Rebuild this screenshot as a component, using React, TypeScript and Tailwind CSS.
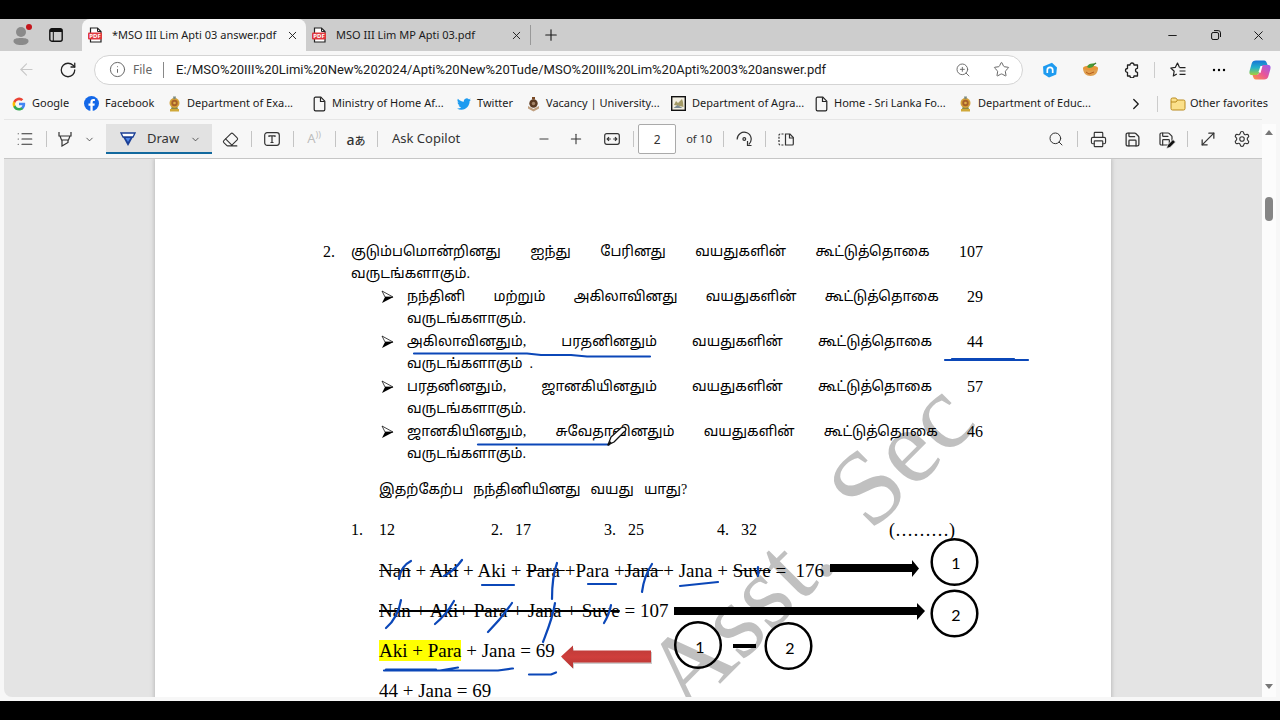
import type { ReactNode } from 'react';
import {
  ArrowLeft,
  ChevronDown,
  ChevronRight,
  Eraser,
  Info,
  List,
  Minus,
  MoveDiagonal,
  Plus,
  Printer,
  RotateCw,
  Save,
  Search,
  Settings,
  Star,
  X,
  ZoomIn,
} from 'lucide-react';

interface BookmarkItem {
  label: string;
  icon: ReactNode;
  width: string;
}

function PdfIcon() {
  return (
    <svg width="15" height="16" viewBox="0 0 15 16" className="shrink-0">
      <path d="M2.500 1h7L13 4.500V15H2.500z" fill="#fff" stroke="#222" strokeWidth="1.200" />
      <path d="M9.500 1v3.500H13" fill="none" stroke="#222" />
      <rect x="0" y="5.500" width="14" height="7" rx="1" fill="#e0393e" />
      <text x="7" y="11" textAnchor="middle" fontSize="6" fontWeight="700" fill="#fff">PDF</text>
    </svg>
  );
}

function GoogleIcon() {
  return (
    <svg width="14" height="14" viewBox="0 0 24 24">
      <path fill="#4285F4" d="M22.600 12.200c0-.8-.1-1.500-.2-2.200H12v4.300h5.900a5 5 0 0 1-2.200 3.300v2.800h3.600c2.100-2 3.300-4.900 3.300-8.200z" />
      <path fill="#34A853" d="M12 23c3 0 5.500-1 7.300-2.600l-3.600-2.800c-1 .7-2.200 1.100-3.700 1.100-2.900 0-5.300-1.900-6.200-4.500H2.200v2.800A11 11 0 0 0 12 23z" />
      <path fill="#FBBC05" d="M5.800 14.200a6.600 6.600 0 0 1 0-4.300V7.100H2.200a11 11 0 0 0 0 9.900z" />
      <path fill="#EA4335" d="M12 5.400c1.600 0 3.100.6 4.200 1.600l3.200-3.100A11 11 0 0 0 2.200 7.100l3.600 2.800C6.700 7.300 9.100 5.400 12 5.400z" />
    </svg>
  );
}

function FacebookIcon() {
  return (
    <svg width="15" height="15" viewBox="0 0 24 24">
      <circle cx="12" cy="12" r="12" fill="#1468e8" />
      <path fill="#fff" d="M16.700 15.500l.5-3.500h-3.300V9.800c0-1 .5-1.900 2-1.900h1.500V5s-1.400-.2-2.700-.2c-2.700 0-4.500 1.600-4.500 4.700V12h-3v3.500h3V24h3.700v-8.500z" />
    </svg>
  );
}

function TwitterIcon() {
  return (
    <svg width="14" height="14" viewBox="0 0 24 24" fill="#1d9bf0">
      <path d="M23.950 4.570a10 10 0 0 1-2.820.77 4.960 4.960 0 0 0 2.160-2.720c-.95.55-2 .95-3.130 1.180a4.920 4.920 0 0 0-8.380 4.480C7.690 8.090 4.070 6.130 1.640 3.160a4.920 4.920 0 0 0 1.520 6.570 4.900 4.900 0 0 1-2.230-.61v.06a4.920 4.920 0 0 0 3.950 4.830 5 5 0 0 1-2.210.08 4.940 4.940 0 0 0 4.600 3.420A9.870 9.870 0 0 1 0 19.540a14 14 0 0 0 7.550 2.210c9.050 0 14-7.500 14-13.980 0-.21 0-.42-.02-.63a9.940 9.940 0 0 0 2.420-2.570z" />
    </svg>
  );
}

function EmblemIcon() {
  return (
    <svg width="13" height="16" viewBox="1 0 13 16">
      <path d="M3 13h9v2.500H3z" fill="#d0a93a" />
      <path d="M5 10h5l1 3H4z" fill="#8a8a45" />
      <circle cx="7.500" cy="7" r="5" fill="#d3a038" />
      <circle cx="7.500" cy="7" r="3.200" fill="#a8602a" />
      <circle cx="7.500" cy="7" r="1.300" fill="#dfb04a" />
      <path d="M6 0.500h3L8.500 3h-2z" fill="#7b8a80" />
    </svg>
  );
}

function CrestIcon() {
  return (
    <svg width="13" height="16" viewBox="1 0 13 16">
      <path d="M2 10l5.500 3L13 10v2.500L7.500 15.500 2 12.500z" fill="#c0a080" />
      <circle cx="7.500" cy="7.500" r="4.200" fill="#5b3a22" />
      <circle cx="7.500" cy="7.500" r="1.700" fill="#a48468" />
      <path d="M6 1h3v2.500H6z" fill="#7a4a26" />
    </svg>
  );
}

function AgrarianIcon() {
  return (
    <svg width="15" height="15" viewBox="0 0 15 15">
      <rect x="0.700" y="0.700" width="13.600" height="13.600" fill="#f2efe2" stroke="#111" strokeWidth="1.400" />
      <path d="M3 9l2-4 2 2 4-4 1 3 .5 5-4-1z" fill="#a39a66" />
      <path d="M2.500 12l4-3 5 3z" fill="#7c8b92" />
    </svg>
  );
}

function PageIcon() {
  return (
    <svg width="13" height="16" viewBox="1 0 13 16" fill="none" stroke="#222" strokeWidth="1.200">
      <path d="M3.500 1.200h5.300l4 4v8.300a1.300 1.300 0 0 1-1.300 1.300h-8a1.300 1.300 0 0 1-1.300-1.300v-11a1.300 1.300 0 0 1 1.300-1.300z" />
      <path d="M8.500 1.500v4h4" />
    </svg>
  );
}

function FolderIcon() {
  return (
    <svg width="16" height="14" viewBox="0 0 16 14">
      <path d="M1 2.500A1.500 1.500 0 0 1 2.500 1h3.300l1.700 2h6A1.500 1.500 0 0 1 15 4.500v7a1.500 1.500 0 0 1-1.500 1.500h-11A1.500 1.500 0 0 1 1 11.500z" fill="#fbe08a" stroke="#b98a1c" />
      <path d="M1 5h5l1.500-2" fill="none" stroke="#b98a1c" />
    </svg>
  );
}

function ProfileIcon() {
  return (
    <svg width="22" height="22" viewBox="0 0 22 22">
      <circle cx="11" cy="8" r="5" fill="#8a8a8a" />
      <path d="M3.500 17c0-2.200 3-3 7.500-3s7.500.8 7.500 3c0 2.500-3 4-7.500 4s-7.500-1.500-7.500-4z" fill="#8a8a8a" />
      <circle cx="19" cy="3" r="3" fill="#c4151c" />
    </svg>
  );
}

function WorkspaceIcon() {
  return (
    <svg width="14" height="14" viewBox="0 0 14 14" fill="none" stroke="#111">
      <rect x="0.800" y="0.800" width="12.400" height="12.400" rx="2" strokeWidth="1.400" />
      <path d="M1 2.500h12" strokeWidth="3" />
      <path d="M4.300 4v9" />
    </svg>
  );
}

function RestoreIcon() {
  return (
    <svg width="10" height="10" viewBox="0 0 10 10" fill="none" stroke="#111">
      <rect x="0.600" y="2.500" width="7" height="7" rx="1.500" />
      <path d="M3 0.600h4.200a2.300 2.300 0 0 1 2.300 2.300V7" />
    </svg>
  );
}

function ShieldIcon() {
  return (
    <svg width="16" height="16" viewBox="0 0 16 16">
      <path d="M10 0.800l5 4.700-.8 7L7 15.500 1.500 12 1 4.500z" fill="#1e9bf0" />
      <path d="M5.300 11V8a2.700 2.700 0 0 1 5.400 0v3" fill="none" stroke="#fff" strokeWidth="1.700" />
    </svg>
  );
}

function BowlIcon() {
  return (
    <svg width="17" height="15" viewBox="0 0 17 15">
      <path d="M1 6h15c0 5-3 8-7.500 8S1 11 1 6z" fill="#e0a050" />
      <ellipse cx="8.500" cy="6" rx="7.500" ry="2.500" fill="#e8963a" />
      <path d="M5 5c1-3 4-4 7-3.500C13 3 11 6 7 6z" fill="#4a9a36" />
      <path d="M11 3l3-2" stroke="#3d7d2c" strokeWidth="1.500" />
      <path d="M4 10l3 2 5-2" fill="none" stroke="#b75c1b" />
    </svg>
  );
}

function PuzzleIcon() {
  return (
    <svg width="16" height="16" viewBox="0 0 16 16" fill="none" stroke="#222" strokeWidth="1.300" strokeLinejoin="round">
      <path d="M3.500 3H6a2 2 0 0 1 4 0h3.500v3.300a2 2 0 1 0 0 4v3.700H10a2 2 0 0 1-4 0H3.500v-3.500a2 2 0 0 1 0-4z" />
    </svg>
  );
}

function FavoritesIcon() {
  return (
    <svg width="16" height="16" viewBox="0 0 16 16" fill="none" stroke="#222" strokeWidth="1.200">
      <path d="M9.500 5.500L7.500 1 5.400 5.300.8 6l3.400 3.200-.9 4.800 3.500-2" strokeLinejoin="round" />
      <path d="M9.500 5.700h6M9.500 9h6M9.500 12.300h6" />
    </svg>
  );
}

function CopilotIcon() {
  return (
    <svg width="22" height="20" viewBox="0 0 22 20">
      <defs>
        <linearGradient id="cool" x1="0" y1="0" x2="0" y2="1">
          <stop offset="0" stopColor="#1673d6" />
          <stop offset="0.5" stopColor="#24b1c9" />
          <stop offset="1" stopColor="#a8d03a" />
        </linearGradient>
        <linearGradient id="warm" x1="1" y1="0" x2="0" y2="1">
          <stop offset="0" stopColor="#9a5cf0" />
          <stop offset="0.5" stopColor="#e8559a" />
          <stop offset="1" stopColor="#ff9440" />
        </linearGradient>
      </defs>
      <path d="M7 0.500h8c2 0 2.500 1.500 3 3L19 6h-4c-2 0-3 1-3.500 3L10 13c-.5 1.500-1.500 2-3 2H3c-2.500 0-3-2-2.300-4.500l2-7C3.300 1.500 4.500.5 7 .5z" fill="url(#cool)" />
      <path d="M15 19.500H7c-2 0-2.500-1.500-3-3L3.500 15H7c2 0 3-1 3.500-3L12 7c.5-1.500 1.500-2 3-2h4c2.500 0 3 2 2.300 4.500l-2 7c-.6 2-1.800 3-4.300 3z" fill="url(#warm)" />
      <path d="M9.500 12l2-6h2l-2 7z" fill="#fff" />
    </svg>
  );
}

function HighlighterIcon() {
  return (
    <svg width="14" height="16" viewBox="0 0 14 16" fill="none" stroke="#333" strokeWidth="1.200">
      <path d="M1 1v4h12V1M2 5l1.500 4h7L12 5M4 9v6l6-3.500V9" />
    </svg>
  );
}

function DrawIcon() {
  return (
    <svg width="16" height="15" viewBox="0 0 16 15">
      <path d="M1 1h14l-2 4H3z" fill="#fff" stroke="#1b3f96" strokeWidth="1.300" />
      <path d="M3 5h10L8 14z" fill="#1b3f96" />
      <path d="M5.500 6h5L8 10z" fill="#4f86e8" />
    </svg>
  );
}

function TextBoxIcon() {
  return (
    <svg width="16" height="14" viewBox="0 0 16 14" fill="none" stroke="#333" strokeWidth="1.200">
      <rect x="0.700" y="0.700" width="14.600" height="12.600" rx="2.500" />
      <path d="M5 5V3.800h6V5M8 3.800v6.700M6.500 10.500h3" />
    </svg>
  );
}

function FitWidthIcon() {
  return (
    <svg width="16" height="12" viewBox="0 0 16 12" fill="none" stroke="#333" strokeWidth="1.200">
      <rect x="0.700" y="0.700" width="14.600" height="10.600" rx="2" />
      <path d="M6.800 6H3.500M5 4.200L3.200 6 5 7.800M9.200 6h3.300M11 4.200L12.800 6 11 7.800" />
    </svg>
  );
}

function RotateIcon() {
  return (
    <svg width="17" height="16" viewBox="0 0 17 16" fill="none" stroke="#333" strokeWidth="1.200">
      <path d="M1.200 8.500a7 7 0 1 1 11.500 5" />
      <path d="M11.500 10v4.500h4" />
      <circle cx="8.300" cy="8" r="1.400" />
    </svg>
  );
}

function PageViewIcon() {
  return (
    <svg width="16" height="13" viewBox="0 0 16 13" fill="none" stroke="#333" strokeWidth="1.200">
      <path d="M7.500 1H12l3.300 3.500V11a1 1 0 0 1-1 1H7.500z" />
      <path d="M11.500 1v4h4" />
      <path d="M5.500 1H2.200a1.200 1.200 0 0 0-1.200 1.200v8.600A1.200 1.200 0 0 0 2.200 12h3.300" strokeDasharray="2 1.300" />
    </svg>
  );
}

function SaveAsIcon() {
  return (
    <span className="relative">
      <Save size={16} strokeWidth={1.8} />
      <svg width="10" height="10" viewBox="0 0 10 10" className="absolute -right-0.5 -bottom-0.5">
        <path d="M0.500 9.500l1-3.500 5.500-5.500 2.500 2.500L4 8.500z" fill="#111" stroke="#f7f7f7" strokeWidth="0.800" />
      </svg>
    </span>
  );
}

function ToolButton({ label, children }: { label: string; children: ReactNode }) {
  return (
    <button aria-label={label} className="flex h-8 w-8 shrink-0 items-center justify-center text-[#333]">
      {children}
    </button>
  );
}

function NavButton({ label, children }: { label: string; children: ReactNode }) {
  return (
    <button aria-label={label} className="flex h-8 w-[41px] shrink-0 items-center justify-center text-[#222]">
      {children}
    </button>
  );
}

function ToolDivider() {
  return (
    <div className="flex w-[10px] shrink-0 justify-center">
      <div className="h-4 w-px bg-[#c4c4c4]" />
    </div>
  );
}

function Tab({ title, active }: { title: string; active?: boolean }) {
  return (
    <div className={active ? 'flex w-56 items-center rounded-t-lg bg-[#f7f7f7] pl-[6px]' : 'flex w-56 items-center pl-[6px]'}>
      <PdfIcon />
      <span className="ml-[9px] flex-1 whitespace-nowrap text-[11px]">{title}</span>
      <button aria-label={`Close ${title}`} className="flex h-7 w-7 items-center justify-center">
        <X size={13} strokeWidth={1.7} />
      </button>
    </div>
  );
}

const BOOKMARKS: BookmarkItem[] = [
  { label: 'Google', icon: <GoogleIcon />, width: 'w-[72px]' },
  { label: 'Facebook', icon: <FacebookIcon />, width: 'w-[84px]' },
  { label: 'Department of Exa...', icon: <EmblemIcon />, width: 'w-[145px]' },
  { label: 'Ministry of Home Af...', icon: <PageIcon />, width: 'w-[144px]' },
  { label: 'Twitter', icon: <TwitterIcon />, width: 'w-[70px]' },
  { label: 'Vacancy | University...', icon: <CrestIcon />, width: 'w-[144px]' },
  { label: 'Department of Agra...', icon: <AgrarianIcon />, width: 'w-[144px]' },
  { label: 'Home - Sri Lanka Fo...', icon: <PageIcon />, width: 'w-[144px]' },
  { label: 'Department of Educ...', icon: <EmblemIcon />, width: 'w-[144px]' },
];

const CLUES = [
  { words: ['நந்தினி', 'மற்றும்', 'அகிலாவினது', 'வயதுகளின்', 'கூட்டுத்தொகை'], total: 29, end: 'வருடங்களாகும்.' },
  { words: ['அகிலாவினதும்,', 'பரதனினதும்', 'வயதுகளின்', 'கூட்டுத்தொகை'], total: 44, end: 'வருடங்களாகும்\u00a0 .' },
  { words: ['பரதனினதும்,', 'ஜானகியினதும்', 'வயதுகளின்', 'கூட்டுத்தொகை'], total: 57, end: 'வருடங்களாகும்.' },
  { words: ['ஜானகியினதும்,', 'சுவேதாவினதும்', 'வயதுகளின்', 'கூட்டுத்தொகை'], total: 46, end: 'வருடங்களாகும்.' },
];

const QUESTION = ['இதற்கேற்ப', 'நந்தினியினது', 'வயது', 'யாது?'];

const ANSWERS = ['17', '25', '32'];

function JustifiedLine({ words, total }: { words: string[]; total: number }) {
  return (
    <p className="flex justify-between whitespace-nowrap">
      {words.map((word) => (
        <span key={word}>{word}</span>
      ))}
      <span className="text-[16px]">{total}</span>
    </p>
  );
}

function Watermark() {
  return (
    <svg className="absolute top-0 left-0 h-[539px] w-[956px]" viewBox="155 158 956 539" aria-hidden="true">
      <g transform="translate(700 700) rotate(-45)" fill="#c0c0c0" fontSize="106" fontFamily="Liberation Serif, serif">
        <text x="-20" y="2">Asst.</text>
        <text x="240" y="2">Sec</text>
      </g>
    </svg>
  );
}

/* Shapes typed into the document plus the pen strokes drawn over it */
function Annotations() {
  return (
    <svg className="absolute top-0 left-0 h-[539px] w-[956px]" viewBox="155 158 956 539">
      <defs>
        <linearGradient id="redArrow" x1="0" y1="0" x2="0" y2="1">
          <stop offset="0" stopColor="#b93a37" />
          <stop offset="0.5" stopColor="#cf3f3c" />
          <stop offset="1" stopColor="#b33431" />
        </linearGradient>
      </defs>
      <path d="M830 563h82v-4l7 8.500-7 8.500v-5h-82z" />
      <path d="M674 606h243v-4l8 8-8 9v-5H674z" />
      <path d="M733 643h23v4h-23z" />
      <path d="M562 657l12-10v4h78v12h-78v5z" fill="#999" opacity="0.500" />
      <path d="M561 655.500l12-11v5h78v12h-78v6z" fill="url(#redArrow)" />
      <g fill="none" stroke="#000" strokeWidth="2.500">
        <circle cx="954.500" cy="561" r="22.800" />
        <circle cx="954.500" cy="612.500" r="22.800" />
        <circle cx="698" cy="644" r="22.800" />
        <circle cx="788.500" cy="645" r="22.800" />
      </g>
      <g fontFamily="Lato, sans-serif" fontSize="16" textAnchor="middle">
        <text x="956" y="568">1</text>
        <text x="956" y="620">2</text>
        <text x="700" y="652">1</text>
        <text x="790" y="653">2</text>
      </g>
      <g fill="none" stroke="#0b47b8" strokeWidth="2.200" strokeLinecap="round" strokeLinejoin="round">
        <path d="M414 352.500h113l14 1.500h30l16 1.500h63" />
        <path d="M945 359h83M952 358h62" />
        <path d="M478 443.500h131" />
        <path d="M399 578c1-8 4-14 12-18" />
        <path d="M444 575q10-5 18-16" />
        <path d="M482 584h32M588 583h28M680 585l38-4" />
        <path d="M557 562c-4 11-5 22-5 36" />
        <path d="M652 563q-8 12-10 28" />
        <path d="M758 566v9" />
        <path d="M401 599c-2 12-8 22-15 28" />
        <path d="M454 600q-8 14-19 23M512 602q-11 16-24 29" />
        <path d="M555 602c-2 14-7 26-12 39" />
        <path d="M611 604q-2 10-7 18" />
        <path d="M384 669.500h56l18-3M386 668.500h50M440 669.500h58l14-2h1" />
        <path d="M529 673.500h22l5-2" />
      </g>
      {/* Pen cursor */}
      <g fill="#fff" stroke="#111" strokeWidth="1.300" strokeLinejoin="round">
        <path d="M608 444l3-8 10-9q4-2 5 1 0 2-2 3l-10 10z" />
        <path d="M608 444l3-3" strokeWidth="2" />
      </g>
    </svg>
  );
}

function DocumentPage() {
  return (
    <article className="relative mx-auto h-[1100px] w-[956px] bg-white pt-[82px] pr-32 pl-[168px] font-['Liberation_Serif','Noto_Sans_Tamil',serif] text-[16px] leading-[22px] text-black shadow-[0_0_4px_1px_#bdbdbd]">
      <Watermark />
      <div className="relative grid grid-cols-[28px_1fr]">
        <span>2.</span>
        <div className="text-[14px]">
          <JustifiedLine words={['குடும்பமொன்றினது', 'ஐந்து', 'பேரினது', 'வயதுகளின்', 'கூட்டுத்தொகை']} total={107} />
          <p>வருடங்களாகும்.</p>
          <ul className="mt-px flex flex-col gap-px pl-7">
            {CLUES.map((clue) => (
              <li key={clue.words[0]} className="grid grid-cols-[28px_1fr]">
                <svg width="14" height="14" viewBox="0 0 14 14" className="mt-1 ml-0.5">
                  <path d="M1 1l11 6H4z" fill="#fff" stroke="#111" strokeWidth="0.800" />
                  <path d="M4 7h8.500L1 13z" />
                </svg>
                <div>
                  <JustifiedLine words={clue.words} total={clue.total} />
                  <p>{clue.end}</p>
                </div>
              </li>
            ))}
          </ul>
        </div>
      </div>

      <p className="relative mt-[14px] flex gap-[10px] pl-14 text-[14px]">
        {QUESTION.map((word) => (
          <span key={word}>{word}</span>
        ))}
      </p>

      <div className="relative mt-[18px] flex pl-7">
        <span className="w-7">1.</span>
        <span className="w-28">12</span>
        {ANSWERS.map((answer, i) => (
          <span key={answer} className="flex w-[113px]">
            <span className="w-6">{i + 2}.</span>
            <span>{answer}</span>
          </span>
        ))}
        <span className="ml-auto pr-7 text-[18px]">(………)</span>
      </div>

      <div className="relative mt-[10px] pl-14 text-[19px] leading-10 whitespace-nowrap">
        <p>
          <s>Nan</s> + <s>Aki</s> + Aki + <s>Para </s>+Para +<s>Jana </s>+ Jana + <s>Suve</s> =&nbsp; 176
        </p>
        <p>
          <s className="decoration-2">Nan + Aki+ Para + Jana + Suve</s> = 107
        </p>
        <p>
          <mark className="bg-[#ffff00]">Aki + Para</mark> + Jana = 69
        </p>
        <p>44 + Jana = 69</p>
      </div>
      <Annotations />
    </article>
  );
}

export default function App() {
  return (
    <div className="flex h-screen flex-col bg-black py-[19px] font-['Noto_Sans',sans-serif] text-[#1a1a1a]">
      <div className="flex min-h-0 flex-1 flex-col bg-[#f7f7f7]">
        {/* Tab strip */}
        <header className="flex h-8 shrink-0 bg-[#cdcdcd]">
          <button aria-label="Profile" className="flex w-[42px] items-center justify-center">
            <ProfileIcon />
          </button>
          <button aria-label="Workspaces" className="mr-3 flex w-7 items-center justify-center">
            <WorkspaceIcon />
          </button>
          <Tab title="*MSO III Lim Apti 03 answer.pdf" active />
          <Tab title="MSO III Lim MP Apti 03.pdf" />
          <div className="h-5 w-px self-center bg-[#999]" />
          <button aria-label="New tab" className="flex w-10 items-center justify-center">
            <Plus size={18} strokeWidth={1.5} />
          </button>
          <div className="ml-auto flex">
            <button aria-label="Minimize" className="flex w-[43px] items-center justify-center">
              <Minus size={13} strokeWidth={1.8} />
            </button>
            <button aria-label="Restore" className="flex w-[43px] items-center justify-center">
              <RestoreIcon />
            </button>
            <button aria-label="Close" className="flex w-[43px] items-center justify-center">
              <X size={15} strokeWidth={1.6} />
            </button>
          </div>
        </header>

        {/* Address bar */}
        <nav className="flex h-[37px] shrink-0 items-center pl-[6px]">
          <button aria-label="Back" className="flex h-8 w-[41px] items-center justify-center text-[#c8c8c8]">
            <ArrowLeft size={19} strokeWidth={1.4} />
          </button>
          <NavButton label="Refresh">
            <RotateCw size={18} strokeWidth={1.7} />
          </NavButton>
          <div className="mr-[6px] ml-[6px] flex h-[30px] flex-1 items-center rounded-full border border-[#d4d4d4] bg-white pr-0.5 pl-[14px]">
            <Info size={17} strokeWidth={1.4} className="text-[#666]" />
            <span className="ml-[7px] w-[30px] text-[12px] text-[#666]">File</span>
            <div className="h-4 w-px bg-[#888]" />
            <input
              aria-label="Address"
              className="ml-3 min-w-0 flex-1 bg-transparent font-['Roboto',sans-serif] text-[13px] outline-none"
              defaultValue="E:/MSO%20III%20Limi%20New%202024/Apti%20New%20Tude/MSO%20III%20Lim%20Apti%2003%20answer.pdf"
            />
            <button aria-label="Zoom" className="flex w-[38px] items-center justify-center text-[#666]">
              <ZoomIn size={16} strokeWidth={1.4} />
            </button>
            <button aria-label="Add to favorites" className="flex w-[38px] items-center justify-center text-[#666]">
              <Star size={17} strokeWidth={1.4} />
            </button>
          </div>
          <NavButton label="Shield extension"><ShieldIcon /></NavButton>
          <NavButton label="Bowl extension"><BowlIcon /></NavButton>
          <NavButton label="Extensions"><PuzzleIcon /></NavButton>
          <div className="mx-0.5 h-4 w-px bg-[#ccc]" />
          <NavButton label="Favorites"><FavoritesIcon /></NavButton>
          <NavButton label="More">
            <svg width="14" height="4" viewBox="0 0 14 4">
              <circle cx="2" cy="2" r="1.200" />
              <circle cx="7" cy="2" r="1.200" />
              <circle cx="12" cy="2" r="1.200" />
            </svg>
          </NavButton>
          <NavButton label="Copilot"><CopilotIcon /></NavButton>
        </nav>

        {/* Bookmarks */}
        <nav className="flex h-[31px] shrink-0 items-center overflow-hidden pr-3 pl-3 text-[11px] whitespace-nowrap">
          {BOOKMARKS.map((item) => (
            <a key={item.label} href="#" className={`flex shrink-0 items-center gap-[6px] ${item.width}`}>
              <span className="shrink-0">{item.icon}</span>
              {item.label}
            </a>
          ))}
          <button aria-label="More bookmarks" className="ml-auto">
            <ChevronRight size={18} strokeWidth={1.7} />
          </button>
          <div className="mx-3 h-4 w-px bg-[#ccc]" />
          <a href="#" className="flex items-center gap-1">
            <FolderIcon />
            Other favorites
          </a>
        </nav>

        <div className="flex min-h-0 flex-1 px-1 pb-1">
          <main className="flex min-w-0 flex-1 flex-col">
            {/* PDF toolbar */}
            <div className="flex h-[39px] shrink-0 items-center border-t border-[#e6e6e6] pr-1 pl-[5px] text-[13px] whitespace-nowrap text-[#333]">
              <ToolButton label="Contents"><List size={18} strokeWidth={1.6} /></ToolButton>
              <ToolDivider />
              <button aria-label="Highlight" className="flex h-8 w-7 items-center justify-center"><HighlighterIcon /></button>
              <button aria-label="Highlight options" className="mr-[7px] flex h-8 w-5 items-center justify-center">
                <ChevronDown size={11} strokeWidth={1.7} />
              </button>
              <button className="mr-0.5 flex h-[30px] w-[106px] items-center border-b-2 border-[#12699e] bg-[#e2e2e2] pt-0.5 pl-[14px]">
                <DrawIcon />
                <span className="ml-[11px] flex-1 text-left">Draw</span>
                <ChevronDown size={11} strokeWidth={1.7} className="mr-[11px]" />
              </button>
              <ToolButton label="Erase"><Eraser size={17} strokeWidth={1.5} /></ToolButton>
              <ToolDivider />
              <ToolButton label="Add text"><TextBoxIcon /></ToolButton>
              <ToolDivider />
              <button aria-label="Read aloud" className="flex h-8 w-8 items-center justify-center text-[#bdbdbd]">
                A<span className="-mt-2 text-[9px]">))</span>
              </button>
              <ToolDivider />
              <button aria-label="Translate" className="h-8 w-8 font-['Noto_Sans','Noto_Sans_CJK_JP',sans-serif] text-[14px] font-medium">
                a<span className="text-[11px]">あ</span>
              </button>
              <ToolDivider />
              <button className="px-[10px]">Ask Copilot</button>
              <div className="ml-[58px] flex items-center">
                <ToolButton label="Zoom out"><Minus size={14} strokeWidth={1.6} /></ToolButton>
                <ToolButton label="Zoom in"><Plus size={16} strokeWidth={1.6} /></ToolButton>
                <div className="w-1" />
                <ToolButton label="Fit to width"><FitWidthIcon /></ToolButton>
                <ToolDivider />
                <input
                  aria-label="Page number"
                  defaultValue="2"
                  className="h-[30px] w-[38px] rounded-xs border border-[#aaa] bg-white text-center text-[12px]"
                />
                <span className="w-[42px] pl-[10px] text-[11px]">of 10</span>
                <ToolDivider />
                <ToolButton label="Rotate"><RotateIcon /></ToolButton>
                <ToolDivider />
                <ToolButton label="Page view"><PageViewIcon /></ToolButton>
              </div>
              <div className="ml-auto flex items-center">
                <ToolButton label="Find"><Search size={16} strokeWidth={1.5} /></ToolButton>
                <ToolDivider />
                <div className="flex gap-0.5">
                  <ToolButton label="Print"><Printer size={17} strokeWidth={1.6} /></ToolButton>
                  <ToolButton label="Save"><Save size={17} strokeWidth={1.8} /></ToolButton>
                  <ToolButton label="Save as"><SaveAsIcon /></ToolButton>
                </div>
                <ToolDivider />
                <div className="flex gap-0.5">
                  <ToolButton label="Full screen"><MoveDiagonal size={20} strokeWidth={1.5} /></ToolButton>
                  <ToolButton label="Settings"><Settings size={18} strokeWidth={1.5} /></ToolButton>
                </div>
              </div>
            </div>

            <div className="min-h-0 flex-1 overflow-hidden rounded-bl-lg border-t border-[#c6c6c6] bg-[#e4e4e4]">
              <DocumentPage />
            </div>
          </main>

          {/* Scrollbar */}
          <div className="mt-[5px] flex w-[14px] flex-col items-center bg-[#fcfcfc] py-[6px]">
            <svg width="8" height="5" viewBox="0 0 8 5" fill="#777"><path d="M4 0l4 5H0z" /></svg>
            <div className="mt-[62px] h-6 w-2 rounded-full bg-[#858585]" />
            <svg width="8" height="5" viewBox="0 0 8 5" fill="#777" className="mt-auto mb-0.5"><path d="M0 0h8L4 5z" /></svg>
          </div>
        </div>
      </div>
    </div>
  );
}
